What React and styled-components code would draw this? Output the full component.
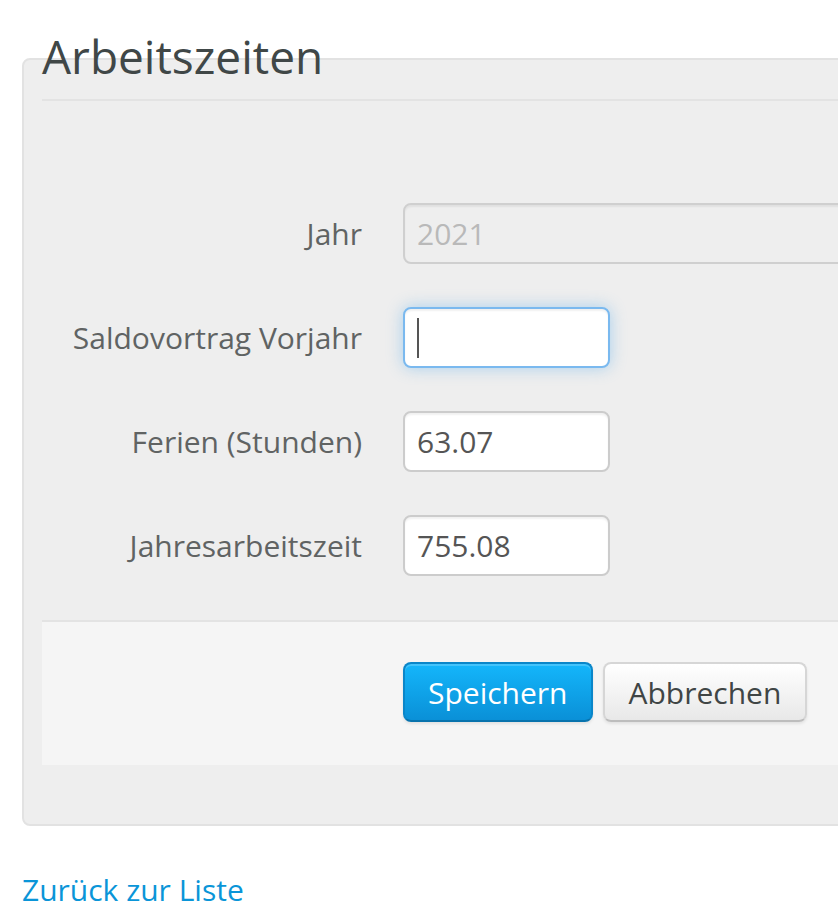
import React from "react";
import styled, { createGlobalStyle } from "styled-components";

const Global = createGlobalStyle`
  html, body { margin: 0; padding: 0; background: #ffffff; overflow: hidden; }
  body { font-family: "Open Sans", "Noto Sans", sans-serif; }
  * { box-sizing: border-box; }
`;

const Page = styled.div`
  width: 838px;
  height: 922px;
  padding: 58px 0 0 22px;
  overflow: hidden;
`;

const Panel = styled.div`
  width: 900px;
  background: #eeeeee;
  border: 2px solid #e2e2e2;
  border-radius: 8px;
  padding: 0 0 59px 18px;
`;

const Legend = styled.div`
  margin-top: -24px;
  font-size: 46px;
  line-height: 40px;
  color: #404747;
  padding-bottom: 23px;
  border-bottom: 2px solid #e3e3e3;
`;

const Form = styled.form`
  display: flex;
  flex-direction: column;
  gap: 43px;
  padding-top: 102px;
`;

const Row = styled.div`
  display: flex;
  align-items: center;
  gap: 41px;
`;

const Label = styled.label`
  flex: 0 0 320px;
  text-align: right;
  font-size: 30px;
  color: #606363;
`;

const Input = styled.input`
  flex: 0 0 auto;
  height: 61px;
  width: ${(p) => (p.$wide ? "600px" : "207px")};
  border: 2px solid ${(p) => (p.disabled ? "#cfcfcf" : "#cccccc")};
  border-radius: 8px;
  padding: 0 12px;
  font-family: inherit;
  font-size: 30px;
  color: ${(p) => (p.disabled ? "#b9b9b9" : "#555555")};
  background: ${(p) => (p.disabled ? "#eeeeee" : "#ffffff")};
  box-shadow: inset 0 2px 2px rgba(0, 0, 0, 0.06);
  outline: none;
`;

const FocusBox = styled.div`
  flex: 0 0 auto;
  height: 61px;
  width: 207px;
  border: 2px solid #7ab9ef;
  border-radius: 8px;
  padding: 0 12px;
  background: #ffffff;
  display: flex;
  align-items: center;
  box-shadow: inset 0 2px 2px rgba(0, 0, 0, 0.06), 0 0 16px rgba(82, 168, 236, 0.45);
`;

const Caret = styled.span`
  width: 2px;
  height: 40px;
  background: #555555;
`;

const Actions = styled.div`
  margin-top: 44px;
  background: #f5f5f5;
  border-top: 2px solid #e3e3e3;
  padding: 40px 0 43px 361px;
  display: flex;
  gap: 10px;
`;

const Button = styled.button`
  height: 60px;
  padding: 0 ${(p) => (p.$primary ? "23px" : "24px")};
  font-family: inherit;
  font-size: 30px;
  border-radius: 8px;
  cursor: pointer;
  color: ${(p) => (p.$primary ? "#ffffff" : "#404545")};
  border: 2px solid ${(p) => (p.$primary ? "#0a86c9" : "#d6d6d6")};
  border-bottom-color: ${(p) => (p.$primary ? "#0873ad" : "#bdbdbd")};
  background: ${(p) =>
    p.$primary
      ? "linear-gradient(to bottom, #14b6fb, #0a90d7)"
      : "linear-gradient(to bottom, #ffffff, #e8e8e8)"};
  box-shadow: inset 0 2px 0 rgba(255, 255, 255, 0.2), 0 2px 3px rgba(0, 0, 0, 0.08);
`;

const Back = styled.a`
  display: inline-block;
  margin-top: 43px;
  font-size: 30px;
  color: #0a95d8;
  text-decoration: none;
`;

export default function App() {
  return (
    <>
      <Global />
      <Page>
        <Panel>
          <Legend>Arbeitszeiten</Legend>
          <Form onSubmit={(e) => e.preventDefault()}>
            <Row>
              <Label>Jahr</Label>
              <Input $wide disabled value="2021" readOnly />
            </Row>
            <Row>
              <Label>Saldovortrag Vorjahr</Label>
              <FocusBox>
                <Caret />
              </FocusBox>
            </Row>
            <Row>
              <Label>Ferien (Stunden)</Label>
              <Input value="63.07" readOnly />
            </Row>
            <Row>
              <Label>Jahresarbeitszeit</Label>
              <Input value="755.08" readOnly />
            </Row>
          </Form>
          <Actions>
            <Button $primary>Speichern</Button>
            <Button>Abbrechen</Button>
          </Actions>
        </Panel>
        <Back href="#">Zurück zur Liste</Back>
      </Page>
    </>
  );
}
